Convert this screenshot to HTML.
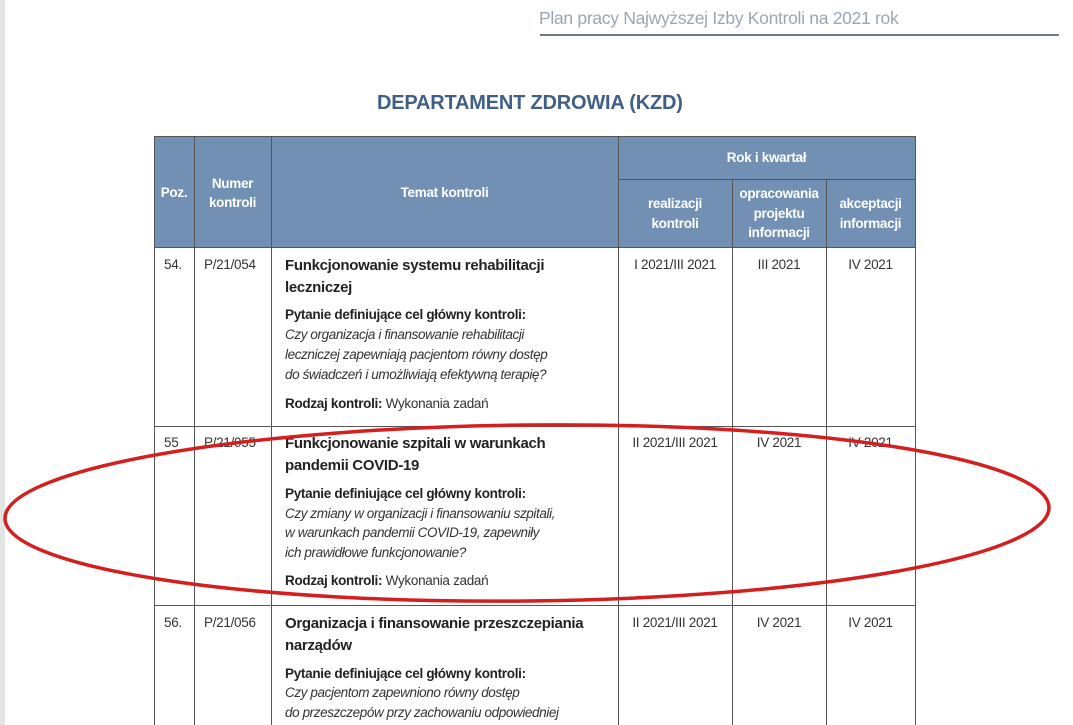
<!DOCTYPE html>
<html><head><meta charset="utf-8"><style>
body{margin:0;width:1073px;height:725px;overflow:hidden;background:#fff;position:relative;font-family:"Liberation Sans",sans-serif;}
.t{position:absolute;white-space:nowrap;line-height:18px;}
.c{position:absolute;text-align:center;line-height:15px;}
.h{color:#fff;font-weight:bold;font-size:13.5px;letter-spacing:-0.3px;}
.b{font-weight:bold;font-size:15px;color:#222;letter-spacing:-0.3px;}
.q{font-weight:bold;font-size:13.5px;color:#222;letter-spacing:-0.3px;}
.i{font-style:italic;font-size:13.5px;color:#333;letter-spacing:-0.4px;}
.n{font-size:13.5px;color:#333;letter-spacing:-0.3px;}
.v{position:absolute;background:#555;width:1px;}
.hz{position:absolute;background:#555;height:1px;}
</style></head><body>
<div style="position:absolute;left:0;top:0;width:5px;height:725px;background:#e4e4e4"></div>
<div class="t" style="left:539px;top:9px;font-size:17.5px;color:#9aa6b4;letter-spacing:-0.3px">Plan pracy Najwyższej Izby Kontroli na 2021 rok</div>
<div style="position:absolute;left:540px;top:34px;width:519px;height:2px;background:#6f7a86"></div>
<div class="t" style="left:377px;top:94px;font-size:20px;font-weight:bold;color:#3f5f87;letter-spacing:-0.2px">DEPARTAMENT ZDROWIA (KZD)</div>

<div style="position:absolute;left:154px;top:136px;width:761px;height:111px;background:#7290b4"></div>
<div class="v" style="left:154px;top:136px;height:589px"></div>
<div class="v" style="left:194px;top:136px;height:589px"></div>
<div class="v" style="left:271px;top:136px;height:589px"></div>
<div class="v" style="left:618px;top:136px;height:589px"></div>
<div class="v" style="left:732px;top:179px;height:546px"></div>
<div class="v" style="left:826px;top:179px;height:546px"></div>
<div class="v" style="left:915px;top:136px;height:589px"></div>
<div class="hz" style="left:154px;top:136px;width:762px"></div>
<div class="hz" style="left:618px;top:179px;width:298px"></div>
<div class="hz" style="left:154px;top:247px;width:762px"></div>
<div class="hz" style="left:154px;top:426px;width:762px"></div>
<div class="hz" style="left:154px;top:605px;width:762px"></div>

<div class="c h" style="left:154px;top:185px;width:40px">Poz.</div>
<div class="c h" style="left:194px;top:174px;width:77px;line-height:19px">Numer<br>kontroli</div>
<div class="c h" style="left:271px;top:185px;width:347px">Temat kontroli</div>
<div class="c h" style="left:618px;top:150px;width:297px">Rok i kwartał</div>
<div class="c h" style="left:618px;top:194px;width:114px;line-height:20px">realizacji<br>kontroli</div>
<div class="c h" style="left:732px;top:184px;width:94px;line-height:19.5px">opracowania<br>projektu<br>informacji</div>
<div class="c h" style="left:826px;top:194px;width:89px;line-height:20px">akceptacji<br>informacji</div>

<!-- row 54 -->
<div class="t n" style="left:164px;top:256px">54.</div>
<div class="t n" style="left:204px;top:256px">P/21/054</div>
<div class="t b" style="left:285px;top:257px">Funkcjonowanie systemu rehabilitacji</div>
<div class="t b" style="left:285px;top:279px">leczniczej</div>
<div class="t q" style="left:285px;top:306px">Pytanie definiujące cel główny kontroli:</div>
<div class="t i" style="left:285px;top:326px">Czy organizacja i finansowanie rehabilitacji</div>
<div class="t i" style="left:285px;top:346px">leczniczej zapewniają pacjentom równy dostęp</div>
<div class="t i" style="left:285px;top:366px">do świadczeń i umożliwiają efektywną terapię?</div>
<div class="t n" style="left:285px;top:395px"><b style="color:#222">Rodzaj kontroli:</b> Wykonania zadań</div>
<div class="c n" style="left:618px;top:257px;width:114px">I 2021/III 2021</div>
<div class="c n" style="left:732px;top:257px;width:94px">III 2021</div>
<div class="c n" style="left:826px;top:257px;width:89px">IV 2021</div>

<!-- row 55 -->
<div class="t n" style="left:164px;top:434px">55</div>
<div class="t n" style="left:204px;top:434px">P/21/055</div>
<div class="t b" style="left:285px;top:435px">Funkcjonowanie szpitali w warunkach</div>
<div class="t b" style="left:285px;top:457px">pandemii COVID-19</div>
<div class="t q" style="left:285px;top:485px">Pytanie definiujące cel główny kontroli:</div>
<div class="t i" style="left:285px;top:505px">Czy zmiany w organizacji i finansowaniu szpitali,</div>
<div class="t i" style="left:285px;top:524px">w warunkach pandemii COVID-19, zapewniły</div>
<div class="t i" style="left:285px;top:544px">ich prawidłowe funkcjonowanie?</div>
<div class="t n" style="left:285px;top:572px"><b style="color:#222">Rodzaj kontroli:</b> Wykonania zadań</div>
<div class="c n" style="left:618px;top:435px;width:114px">II 2021/III 2021</div>
<div class="c n" style="left:732px;top:435px;width:94px">IV 2021</div>
<div class="c n" style="left:826px;top:435px;width:89px">IV 2021</div>

<!-- row 56 -->
<div class="t n" style="left:164px;top:614px">56.</div>
<div class="t n" style="left:204px;top:614px">P/21/056</div>
<div class="t b" style="left:285px;top:615px">Organizacja i finansowanie przeszczepiania</div>
<div class="t b" style="left:285px;top:637px">narządów</div>
<div class="t q" style="left:285px;top:665px">Pytanie definiujące cel główny kontroli:</div>
<div class="t i" style="left:285px;top:684px">Czy pacjentom zapewniono równy dostęp</div>
<div class="t i" style="left:285px;top:704px">do przeszczepów przy zachowaniu odpowiedniej</div>
<div class="c n" style="left:618px;top:615px;width:114px">II 2021/III 2021</div>
<div class="c n" style="left:732px;top:615px;width:94px">IV 2021</div>
<div class="c n" style="left:826px;top:615px;width:89px">IV 2021</div>

<svg style="position:absolute;left:0;top:0" width="1073" height="725">
<ellipse cx="527" cy="513" rx="522" ry="88" transform="rotate(-0.6 527 513)" fill="none" stroke="#d41f1f" stroke-width="3.5"/>
</svg>
</body></html>
